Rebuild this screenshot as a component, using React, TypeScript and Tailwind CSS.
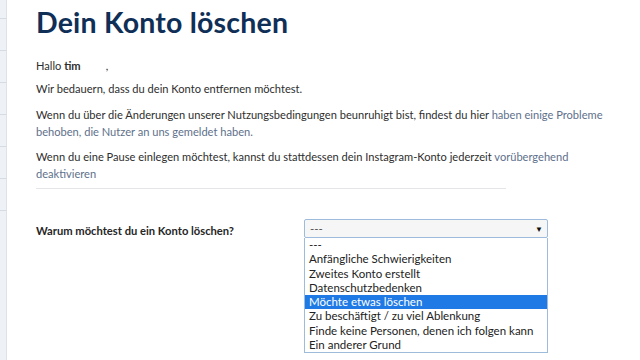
import React from 'react';

const options = [
  '---',
  'Anfängliche Schwierigkeiten',
  'Zweites Konto erstellt',
  'Datenschutzbedenken',
  'Möchte etwas löschen',
  'Zu beschäftigt / zu viel Ablenkung',
  'Finde keine Personen, denen ich folgen kann',
  'Ein anderer Grund',
];

const Sidebar: React.FC = () => (
  <aside className="w-[7px] shrink-0 bg-[#eef1f5] border-r border-[#dde2e8] flex flex-col">
    <div className="h-[19px] border-b border-[#d5dbe3]" />
    {[0, 1, 2, 3, 4, 5].map((i) => (
      <div key={i} className="h-[32px] border-b border-[#d5dbe3]" />
    ))}
  </aside>
);

export default function App() {
  return (
    <div className="w-[640px] h-[360px] overflow-hidden flex bg-white font-['Lato','Open_Sans',sans-serif]">
      <Sidebar />
      <main className="flex-1 pl-[29px] pr-[20px] pt-[6px]">
        <h1 className="text-[28.5px] leading-[32px] font-bold text-[#0f2f57] tracking-[0.2px]">
          Dein Konto löschen
        </h1>

        <div className="mt-[19px] text-[11.1px] leading-[17px] text-[#2e2e2e]">
          <p>
            Hallo <span className="font-bold">tim</span>
            <span className="ml-[25px]">,</span>
          </p>
          <p className="mt-[6px]">Wir bedauern, dass du dein Konto entfernen möchtest.</p>
          <p className="mt-[9px]">
            Wenn du über die Änderungen unserer Nutzungsbedingungen beunruhigt bist, findest du hier{' '}
            <span className="text-[#5e708b]">haben einige Probleme</span>
            <br />
            <span className="text-[#5e708b]">behoben, die Nutzer an uns gemeldet haben.</span>
          </p>
          <p className="mt-[8px]">
            Wenn du eine Pause einlegen möchtest, kannst du stattdessen dein Instagram-Konto jederzeit{' '}
            <span className="text-[#5e708b]">vorübergehend</span>
            <br />
            <span className="text-[#5e708b]">deaktivieren</span>
          </p>
        </div>

        <div className="mt-[6px] w-[470px] border-t border-[#e3e5e8]" />

        <div className="mt-[30px] flex items-start">
          <label className="w-[268px] pt-[4px] text-[11.2px] font-bold text-[#262626]">
            Warum möchtest du ein Konto löschen?
          </label>
          <div className="w-[244px] text-[11.5px] text-[#222]">
            <div className="h-[19px] flex items-center justify-between pl-[5px] pr-[4px] bg-[#f6f6f6] border border-[#9fbbdc] rounded-[2px]">
              <span className="text-[#555]">---</span>
              <span className="text-[8px] text-[#111]">▼</span>
            </div>
            <ul className="border border-t-0 border-[#9fbbdc] bg-white">
              {options.map((o) => (
                <li
                  key={o}
                  className={
                    o === 'Möchte etwas löschen'
                      ? 'h-[14.3px] leading-[14px] px-[4px] bg-[#1f7ae6] text-white'
                      : 'h-[14.3px] leading-[14px] px-[4px]'
                  }
                >
                  {o}
                </li>
              ))}
            </ul>
          </div>
        </div>
      </main>
    </div>
  );
}
